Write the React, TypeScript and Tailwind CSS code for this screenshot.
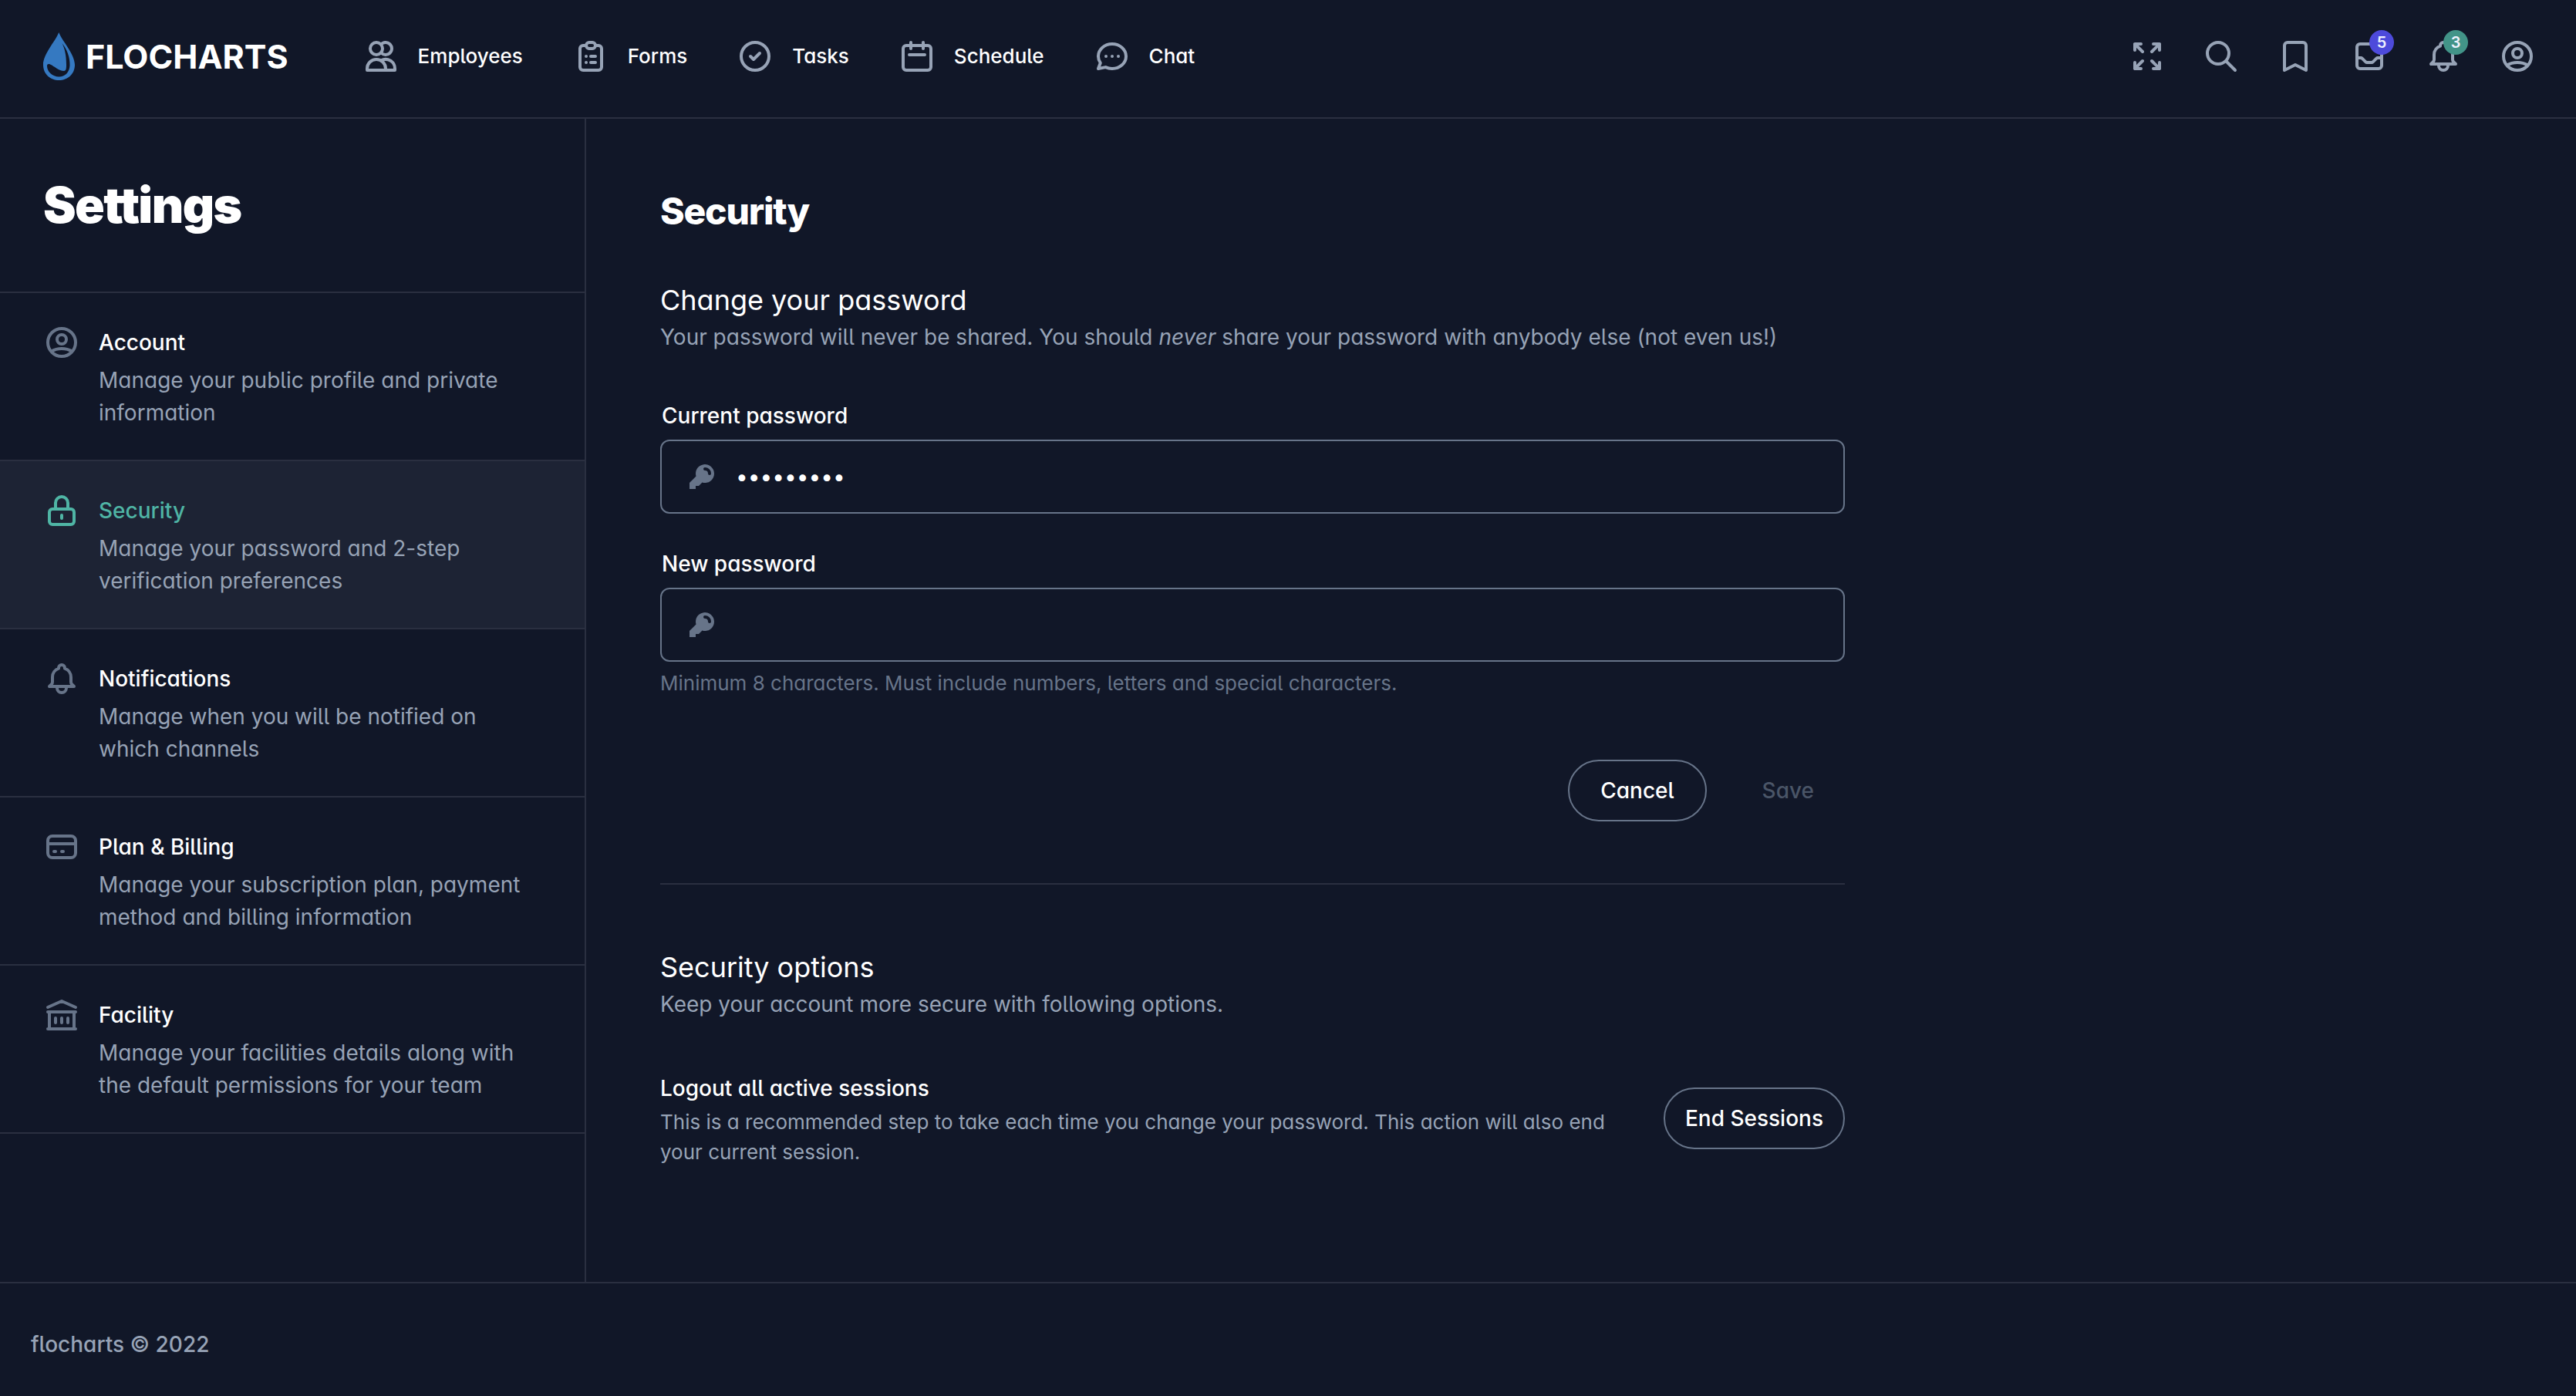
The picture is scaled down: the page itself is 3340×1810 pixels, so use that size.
import type { ComponentType, ReactNode } from "react";
import {
  HiOutlineUsers,
  HiOutlineClipboardList,
  HiOutlineCheckCircle,
  HiOutlineCalendar,
  HiOutlineChat,
  HiOutlineArrowsExpand,
  HiOutlineSearch,
  HiOutlineBookmark,
  HiOutlineInbox,
  HiOutlineBell,
  HiOutlineUserCircle,
  HiOutlineLockClosed,
  HiOutlineCreditCard,
  HiOutlineLibrary,
  HiKey,
} from "react-icons/hi";

type Icon = ComponentType<{ className?: string }>;

const nav: { label: string; icon: Icon }[] = [
  { label: "Employees", icon: HiOutlineUsers },
  { label: "Forms", icon: HiOutlineClipboardList },
  { label: "Tasks", icon: HiOutlineCheckCircle },
  { label: "Schedule", icon: HiOutlineCalendar },
  { label: "Chat", icon: HiOutlineChat },
];

const actions: { label: string; icon: Icon; count?: string; badge?: string }[] = [
  { label: "Fullscreen", icon: HiOutlineArrowsExpand },
  { label: "Search", icon: HiOutlineSearch },
  { label: "Bookmarks", icon: HiOutlineBookmark },
  { label: "Messages", icon: HiOutlineInbox, count: "5", badge: "bg-[#4d4adb]" },
  { label: "Notifications", icon: HiOutlineBell, count: "3", badge: "bg-[#429488]" },
  { label: "Profile", icon: HiOutlineUserCircle },
];

const sections: { title: string; text: string; icon: Icon; active?: boolean }[] = [
  { title: "Account", text: "Manage your public profile and private information", icon: HiOutlineUserCircle },
  { title: "Security", text: "Manage your password and 2-step verification preferences", icon: HiOutlineLockClosed, active: true },
  { title: "Notifications", text: "Manage when you will be notified on which channels", icon: HiOutlineBell },
  { title: "Plan & Billing", text: "Manage your subscription plan, payment method and billing information", icon: HiOutlineCreditCard },
  { title: "Facility", text: "Manage your facilities details along with the default permissions for your team", icon: HiOutlineLibrary },
];

function Logo() {
  return (
    <a href="#" className="flex items-center gap-3.5">
      <svg viewBox="0 0 41 62" className="h-[62px] w-[41px]" fill="#3579c1" aria-hidden="true">
        <path
          fillRule="evenodd"
          d="M20.3 0C25 12 41 28 41 42C41 54 32 62 20.500 62S0 54 0 42C0 28 15.600 12 20.300 0ZM24.500 14C31 22 35 33 34.500 43C34 52 28 57.500 20.500 57.500C12 57.500 5 51 5 43.500C5 41 7 40.500 9 41.500C15 44 20 50 27 50C30 50 30 46 30 42C30 30 28 21 24.500 14Z"
        />
      </svg>
      <span className="text-[43px] leading-none font-bold">FLOCHARTS</span>
    </a>
  );
}

function Header() {
  return (
    <header className="flex h-[154px] items-center justify-between border-b-2 border-[#2a2f40] pr-13 pb-1.5 pl-14">
      <div className="flex items-center gap-24">
        <Logo />
        <nav className="flex items-center gap-16">
          {nav.map(({ label, icon: Glyph }) => (
            <a key={label} href="#" className="flex items-center gap-6 text-[26px] leading-12 font-medium">
              <Glyph className="size-12 text-[#97a3b6]" />
              {label}
            </a>
          ))}
        </nav>
      </div>
      <div className="flex items-center gap-12">
        {actions.map(({ label, icon: Glyph, count, badge }) => (
          <button key={label} type="button" aria-label={label} className="relative text-[#97a3b6]">
            <Glyph className="size-12" />
            {count && (
              <span className={`absolute -top-2.5 -right-2 flex size-8 items-center justify-center rounded-full text-xl leading-none font-semibold text-indigo-50 ${badge}`}>
                {count}
              </span>
            )}
          </button>
        ))}
      </div>
    </header>
  );
}

function Sidebar() {
  return (
    <aside className="w-[760px] shrink-0 border-r-2 border-[#2a2f40]">
      <h1 className="px-14 pt-18 pb-18 text-[64px] leading-20 font-black tracking-tight">Settings</h1>
      <nav className="border-t-2 border-[#2a2f40]">
        {sections.map(({ title, text, icon: Glyph, active }) => (
          <a
            key={title}
            href="#"
            className={`flex gap-6 border-b-2 border-[#2a2f40] px-14 py-10 ${active ? "bg-[#1d2334]" : ""}`}
          >
            <Glyph className={`size-12 shrink-0 ${active ? "text-[#4fb5a5]" : "text-[#677489]"}`} />
            <div className="flex flex-col gap-1">
              <div className={`text-[28px] leading-12 font-medium ${active ? "text-[#4fb5a5]" : ""}`}>{title}</div>
              <p className="text-[28px] leading-[42px] text-[#97a3b6]">{text}</p>
            </div>
          </a>
        ))}
      </nav>
    </aside>
  );
}

function PasswordField({ id, label, value }: { id: string; label: string; value?: string }) {
  return (
    <div className="flex flex-col gap-2.5">
      <label htmlFor={id} className="px-0.5 text-[28px] leading-[42px] font-medium">
        {label}
      </label>
      <div className="flex h-24 items-center gap-6 rounded-xl border-2 border-[#677489] px-8">
        <HiKey className="size-10 text-[#677489]" />
        <input id={id} type="password" defaultValue={value} className="h-full min-w-0 flex-1 bg-transparent text-[28px] outline-none" />
      </div>
    </div>
  );
}

function SectionHeading({ title, children }: { title: string; children: ReactNode }) {
  return (
    <div>
      <h3 className="text-[36px] leading-[54px]">{title}</h3>
      <p className="text-[28px] leading-[42px] text-[#97a3b6]">{children}</p>
    </div>
  );
}

const outlined = "h-20 shrink-0 rounded-full border-2 border-[#677489] text-[28px] font-medium";

export default function App() {
  return (
    <div className="flex min-h-screen flex-col bg-[#111728] font-['Inter',sans-serif] text-white [font-feature-settings:'cv05','cv11']">
      <Header />
      <div className="flex flex-1">
        <Sidebar />
        <main className="flex-1 px-24 pt-20">
          <div className="max-w-[1536px]">
            <h2 className="text-[48px] leading-20 font-extrabold tracking-tight">Security</h2>
            <form className="mt-12">
              <SectionHeading title="Change your password">
                Your password will never be shared. You should <em>never</em> share your password with anybody else (not even us!)
              </SectionHeading>
              <div className="mt-15 flex flex-col gap-11">
                <PasswordField id="current-password" label="Current password" value="password1" />
                <PasswordField id="new-password" label="New password" />
              </div>
              <p className="mt-2 text-[26px] leading-[39px] text-[#677489]">
                Minimum 8 characters. Must include numbers, letters and special characters.
              </p>
              <div className="mt-20 flex justify-end">
                <button type="button" className={`px-10 ${outlined}`}>Cancel</button>
                <button type="submit" disabled className="ml-8 h-20 px-10 text-[28px] font-medium text-[#4a5567]">Save</button>
              </div>
            </form>
            <hr className="mt-20 mb-20 border-t-2 border-[#2a2f40]" />
            <SectionHeading title="Security options">Keep your account more secure with following options.</SectionHeading>
            <div className="mt-16 flex items-center justify-between gap-12">
              <div>
                <h4 className="text-[28px] leading-12 font-medium">Logout all active sessions</h4>
                <p className="text-[26px] leading-[39px] text-[#97a3b6]">
                  This is a recommended step to take each time you change your password. This action will also end your current session.
                </p>
              </div>
              <button type="button" className={`px-[26px] ${outlined}`}>End Sessions</button>
            </div>
          </div>
        </main>
      </div>
      <footer className="border-t-2 border-[#2a2f40] px-10 pt-[58px] pb-[46px] text-[28px] leading-[42px] font-medium text-[#97a3b6]">
        flocharts © 2022
      </footer>
    </div>
  );
}
